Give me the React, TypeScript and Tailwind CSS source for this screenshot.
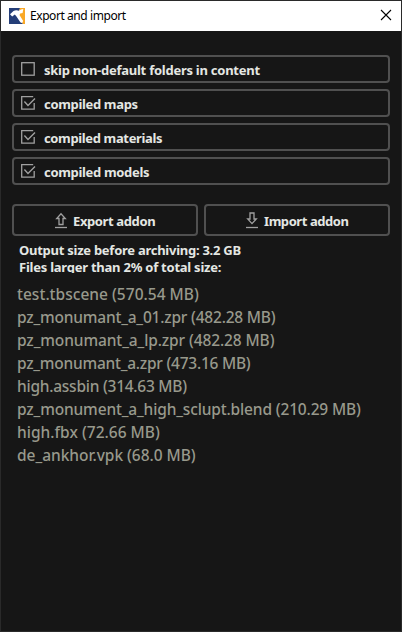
import React from "react";

const options = [
  { label: "skip non-default folders in content", checked: false, tracking: "tracking-[-0.25px]" },
  { label: "compiled maps", checked: true, tracking: "tracking-[-0.33px]" },
  { label: "compiled materials", checked: true, tracking: "tracking-[-0.36px]" },
  { label: "compiled models", checked: true, tracking: "tracking-[-0.32px]" },
];

const actions = [
  { label: "Export addon", down: false, layout: "pl-10", tracking: "tracking-[-0.38px]" },
  { label: "Import addon", down: true, layout: "pl-[39px]", tracking: "tracking-[-0.43px]" },
];

const files = [
  { text: "test.tbscene (570.54 MB)", tracking: "tracking-[0.02px]" },
  { text: "pz_monumant_a_01.zpr (482.28 MB)", tracking: "tracking-[-0.2px]" },
  { text: "pz_monumant_a_lp.zpr (482.28 MB)", tracking: "tracking-[-0.11px]" },
  { text: "pz_monumant_a.zpr (473.16 MB)", tracking: "tracking-[-0.24px]" },
  { text: "high.assbin (314.63 MB)", tracking: "tracking-[-0.25px]" },
  { text: "pz_monument_a_high_sclupt.blend (210.29 MB)", tracking: "tracking-[-0.15px]" },
  { text: "high.fbx (72.66 MB)", tracking: "tracking-[0.02px]" },
  { text: "de_ankhor.vpk (68.0 MB)", tracking: "tracking-[-0.03px]" },
];

function HammerLogo() {
  return (
    <svg width="16" height="16" viewBox="0 0 16 16" className="shrink-0">
      <path d="M0 0H11L9 8L14 16H0Z" fill="#253e78" />
      <path d="M11 0H16V16H14L9 7Z" fill="#f9a826" />
      <path d="M1 6.2L4.5 3Q7 1.6 10 2.8L12 1.5L14.3 1L13.6 5L11.2 5.6L10.5 7L14.2 13L13 15L11.5 14.6L7.3 8.2L5.8 6.6L3.2 8.4Z" fill="#fff" />
    </svg>
  );
}

function CheckIcon({ checked }: { checked: boolean }) {
  return (
    <svg width="16" height="16" viewBox="0 0 16 16" fill="none" stroke="#a0a0a0" className="shrink-0">
      {checked ? (
        <>
          <path d="M13.2 1.7H1.7V14.2H14.2V8" strokeWidth="1.3" />
          <path d="M4.4 6.6L8 10.4L15 3.6" strokeWidth="1.4" />
        </>
      ) : (
        <rect x="1.7" y="1.7" width="12.5" height="12.5" strokeWidth="1.3" />
      )}
    </svg>
  );
}

function TransferIcon({ down }: { down?: boolean }) {
  return (
    <svg width="14" height="17" viewBox="0 0 14 17" fill="none" stroke="#a0a0a0" strokeWidth="1.3" className="shrink-0">
      <path d={down ? "M5 1H9V7H11.3L7 11.6L2.7 7H5Z" : "M5 12.5H9V6.5H11.3L7 1.8L2.7 6.5H5Z"} />
      <path d="M1 15.5H13" />
    </svg>
  );
}

export default function App() {
  return (
    <div className="flex h-[632px] w-[402px] flex-col overflow-hidden border border-[#2a2a2a] bg-[#161616] font-['Noto_Sans','Open_Sans',sans-serif]">
      <header className="flex h-[30px] shrink-0 items-center bg-white pl-2 pr-[9px] text-black">
        <HammerLogo />
        <h1 className="ml-[5px] whitespace-nowrap text-[12px] font-normal leading-[16px] tracking-[-0.43px]">Export and import</h1>
        <svg width="12" height="12" viewBox="0 0 12 12" className="-mt-[2px] ml-auto" stroke="#000" strokeWidth="1.1">
          <path d="M1 1L11 11M11 1L1 11" />
        </svg>
      </header>
      <main className="px-[11px] pt-6">
        <div className="flex w-[378px] flex-col gap-1.5">
          {options.map((o) => (
            <div key={o.label} className="flex h-7 items-center rounded border-2 border-[#505050] pl-1.5">
              <CheckIcon checked={o.checked} />
              <span className={`ml-2 mt-[2px] whitespace-nowrap text-[13px] font-bold leading-[18px] text-[#e4e7e3] ${o.tracking}`}>{o.label}</span>
            </div>
          ))}
        </div>
        <div className="mt-[19px] flex w-[378px] gap-1.5">
          {actions.map((a) => (
            <button key={a.label} className={`flex h-8 w-[186px] items-center rounded border-2 border-[#505050] ${a.layout}`}>
              <TransferIcon down={a.down} />
              <span className={`ml-[5px] mt-[2px] whitespace-nowrap text-[13px] font-bold leading-[18px] text-[#e4e7e3] ${a.tracking}`}>{a.label}</span>
            </button>
          ))}
        </div>
        <div className="ml-[7px] mt-[6px] whitespace-nowrap text-[13px] font-bold leading-[17px] text-[#e4e7e3]">
          <p className="tracking-[-0.26px]">Output size before archiving: 3.2 GB</p>
          <p className="h-[14px] overflow-hidden tracking-[-0.24px]">Files larger than 2% of total size:</p>
        </div>
        <ul className="ml-[5px] mt-[10px] text-[15.5px] font-medium leading-[23px] text-[#98998c]">
          {files.map((f) => (
            <li key={f.text} className="whitespace-nowrap"><span className={f.tracking}>{f.text}</span></li>
          ))}
        </ul>
      </main>
    </div>
  );
}
